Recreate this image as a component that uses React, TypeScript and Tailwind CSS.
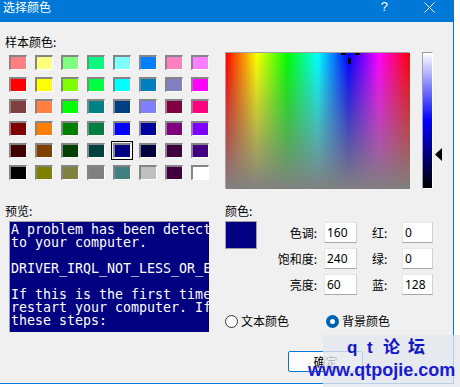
import React from "react";

const swatches: string[][] = [
  ["#FF8080", "#FFFF80", "#80FF80", "#00FF80", "#80FFFF", "#0080FF", "#FF80C0", "#FF80FF"],
  ["#FF0000", "#FFFF00", "#80FF00", "#00FF40", "#00FFFF", "#0080C0", "#8080C0", "#FF00FF"],
  ["#804040", "#FF8040", "#00FF00", "#008080", "#004080", "#8080FF", "#800040", "#FF0080"],
  ["#800000", "#FF8000", "#008000", "#008040", "#0000FF", "#0000A0", "#800080", "#8000FF"],
  ["#400000", "#804000", "#004000", "#004040", "#000080", "#000040", "#400040", "#400080"],
  ["#000000", "#808000", "#808040", "#808080", "#408080", "#C0C0C0", "#400040", "#FFFFFF"],
];

const previewLines = [
  "A problem has been detect",
  "to your computer.",
  "",
  "DRIVER_IRQL_NOT_LESS_OR_E",
  "",
  "If this is the first time",
  "restart your computer. If",
  "these steps:",
];

function Field({ value }: { value: string }) {
  return (
    <div className="h-[21px] bg-white border border-[#e6e6e6] border-b-[#a8a8a8] border-r-[#cfcfcf] flex items-center pl-[2px] text-[12px] font-['Noto_Sans','Liberation_Sans',sans-serif] text-black">
      {value}
    </div>
  );
}

function Label({ text, className = "" }: { text: string; className?: string }) {
  return <div className={"h-[21px] leading-[21px] text-[12px] " + className}>{text}</div>;
}

export default function App() {
  return (
    <div className="relative w-[460px] h-[387px] bg-white overflow-hidden font-['Noto_Sans_CJK_SC','Noto_Sans',sans-serif] text-black">
      <div className="w-[454px] h-[384px] bg-[#f0f0f0] border-r border-b border-[#0078d7] flex flex-col">
        {/* title bar */}
        <div className="h-[22px] bg-[#0078d7] flex items-start text-white text-[12px] leading-[14px] pt-0 pl-[3px] shrink-0">
          <span>选择颜色</span>
          <span className="ml-auto mr-[36px] text-[13px] leading-[14px] font-['Liberation_Sans',sans-serif]">?</span>
          <svg width="11" height="11" viewBox="0 0 11 11" className="mt-[2px] mr-[18px]">
            <path d="M0.5 0.5 L10.5 10.5 M10.5 0.5 L0.5 10.5" stroke="white" strokeWidth="1" />
          </svg>
        </div>

        {/* top section */}
        <div className="h-[168px] flex shrink-0">
          <div className="w-[220px] pl-[5px] pt-[12px]">
            <div className="h-[16px] leading-[16px] text-[12px]">样本颜色:</div>
            <div className="mt-[5px] ml-[4px] grid grid-cols-[repeat(8,18px)] gap-x-[8px] gap-y-[7px]">
              {swatches.flatMap((row, r) =>
                row.map((c, i) => (
                  <div
                    key={r + "-" + i}
                    className={
                      "w-[18px] h-[15px] border-t-2 border-l-2 border-[#858585] border-b border-r border-b-white border-r-white" +
                      (r === 4 && i === 4 ? " outline outline-1 outline-black outline-offset-1" : "")
                    }
                    style={{ backgroundColor: c }}
                  />
                ))
              )}
            </div>
          </div>
          <div className="pt-[30px] pl-[5px] flex items-start">
            <div className="relative w-[185px] h-[137px] border-t border-l border-[#a0a0a0] border-b border-r border-b-white border-r-white">
              <svg width="184" height="136" className="block">
                <defs>
                  <linearGradient id="hue" x1="0" y1="0" x2="1" y2="0">
                    <stop offset="0" stopColor="#ff0000" />
                    <stop offset="0.1667" stopColor="#ffff00" />
                    <stop offset="0.3333" stopColor="#00ff00" />
                    <stop offset="0.5" stopColor="#00ffff" />
                    <stop offset="0.6667" stopColor="#0000ff" />
                    <stop offset="0.8333" stopColor="#ff00ff" />
                    <stop offset="1" stopColor="#ff0000" />
                  </linearGradient>
                  <linearGradient id="sat" x1="0" y1="0" x2="0" y2="1">
                    <stop offset="0" stopColor="#808080" stopOpacity="0" />
                    <stop offset="1" stopColor="#808080" stopOpacity="1" />
                  </linearGradient>
                </defs>
                <rect x="0" y="0" width="184" height="136" fill="url(#hue)" />
                <rect x="0" y="0" width="184" height="136" fill="url(#sat)" />
                <rect x="115" y="0" width="5" height="2" fill="#000" />
                <rect x="129" y="0" width="5" height="2" fill="#000" />
                <rect x="122" y="5" width="3" height="6" fill="#000" />
              </svg>
            </div>
            <div className="ml-[12px] w-[11px] h-[137px] border-t border-l border-[#a0a0a0] border-b border-r border-b-white border-r-white bg-[linear-gradient(to_bottom,#ffffff_0%,#0000ff_50%,#000000_100%)]" />
            <svg width="8" height="13" viewBox="0 0 8 13" className="ml-[2px] mt-[96px]">
              <path d="M7 0 L0 6.5 L7 13 Z" fill="#000" />
            </svg>
          </div>
        </div>

        {/* bottom section */}
        <div className="h-[143px] flex shrink-0">
          <div className="w-[220px] pl-[5px] pt-[13px]">
            <div className="h-[16px] leading-[16px] text-[12px]">预览:</div>
            <div className="mt-[2px] ml-[4px] w-[200px] h-[111px] bg-[#000080] border-t border-l border-[#a0a0a0] overflow-hidden pl-[1px] pt-[1px]">
              {previewLines.map((l, i) => (
                <div
                  key={i}
                  className="h-[13px] leading-[13px] text-[13.3px] text-white whitespace-pre font-['DejaVu_Sans_Mono',monospace]"
                >
                  {l || " "}
                </div>
              ))}
            </div>
          </div>
          <div className="pl-[5px] pt-[13px]">
            <div className="h-[16px] leading-[16px] text-[12px]">颜色:</div>
            <div className="mt-[2px] flex items-start">
              <div className="w-[32px] h-[28px] bg-[#000080] border border-[#a0a0a0]" />
              <div className="mt-[1px] grid grid-cols-[67px_33px_45px_31px] gap-y-[5px]">
                <Label text="色调:" className="text-right pr-[7px]" />
                <Field value="160" />
                <Label text="红:" className="pl-[15px]" />
                <Field value="0" />
                <Label text="饱和度:" className="text-right pr-[7px]" />
                <Field value="240" />
                <Label text="绿:" className="pl-[15px]" />
                <Field value="0" />
                <Label text="亮度:" className="text-right pr-[7px]" />
                <Field value="60" />
                <Label text="蓝:" className="pl-[15px]" />
                <Field value="128" />
              </div>
            </div>
            <div className="mt-[19px] flex items-center text-[12px] leading-[14px]">
              <div className="w-[13px] h-[13px] rounded-full border border-[#333] bg-white" />
              <span className="ml-[3px]">文本颜色</span>
              <div className="ml-[37px] w-[13px] h-[13px] rounded-full bg-[#0063b1] flex items-center justify-center">
                <div className="w-[5px] h-[5px] rounded-full bg-white" />
              </div>
              <span className="ml-[3px]">背景颜色</span>
            </div>
          </div>
        </div>

        {/* buttons */}
        <div className="mt-[18px] pl-[288px] flex">
          <div className="w-[75px] h-[21px] rounded-[2px] border border-[#0078d7] bg-[#fcfcfc] flex items-center justify-center text-[12px]">
            确定
          </div>
        </div>
      </div>

      {/* watermark overlay */}
      <div className="absolute left-[323px] top-[335px] w-[137px] h-[52px] bg-[#e3e8ee]/80" />
      <div className="absolute left-[347px] top-[338px] flex items-center text-[17px] leading-[20px] font-bold text-[#1515c8] font-['Liberation_Sans','Noto_Sans_CJK_SC',sans-serif]">
        <span className="w-[20px]">q</span>
        <span className="w-[16px]">t</span>
        <span className="w-[25px]">论</span>
        <span>坛</span>
      </div>
      <div className="absolute left-[308px] top-[359px] text-[18px] leading-[22px] font-bold text-[#1a1ad0] font-['Liberation_Sans',sans-serif]">
        www.qtpojie.com
      </div>
    </div>
  );
}
